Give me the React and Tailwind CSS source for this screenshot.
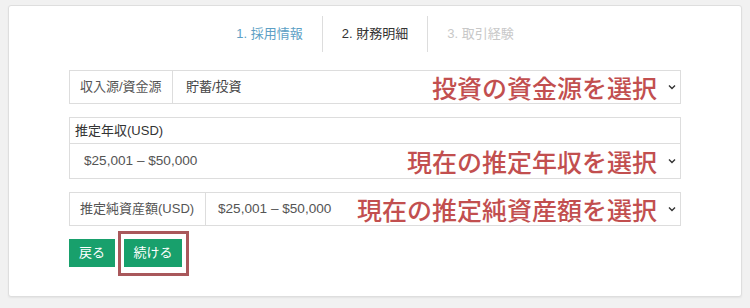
import React from "react";

const Chevron = () => (
  <svg width="8" height="6" viewBox="0 0 8 6" className="shrink-0">
    <path d="M1 1.5 L4 4.5 L7 1.5" fill="none" stroke="#333" strokeWidth="1.4" />
  </svg>
);

const ff = { fontFamily: '"Liberation Sans", "Noto Sans CJK JP", sans-serif' };
const redCls = "ml-auto text-[25px] leading-none font-medium text-[#c24f4f]";
const redFont = { fontFamily: '"Noto Sans CJK JP", sans-serif' };

export default function App() {
  return (
    <div className="w-[750px] h-[308px] bg-[#f1f1f1] pt-[5px] pl-[8px]" style={ff}>
      <div className="w-[734px] h-[292px] bg-white border border-[#dedede] rounded-[3px] shadow-[0_1px_2px_rgba(0,0,0,0.06)] pt-[10px] px-[60px]">
        {/* Tabs */}
        <div className="flex justify-center h-[36px] text-[13px]">
          <div className="flex items-center px-[19px] text-[#5d9fc5]">1. 採用情報</div>
          <div className="flex items-center px-[19px] border-l border-[#dddddd] text-[#333]">2. 財務明細</div>
          <div className="flex items-center px-[19px] border-l border-[#dddddd] text-[#c8c8c8]">3. 取引経験</div>
        </div>

        {/* Row 1 */}
        <div className="mt-[18px] flex h-[34px] border border-[#dddddd] text-[13px]">
          <div className="w-[103px] flex items-center pl-[10px] text-[#555] border-r border-[#dddddd]">収入源/資金源</div>
          <div className="flex-1 flex items-center pl-[13px] pr-[4px]">
            <span className="text-[#444]">貯蓄/投資</span>
            <span className={redCls} style={redFont}>投資の資金源を選択</span>
            <span className="ml-[11px]"><Chevron /></span>
          </div>
        </div>

        {/* Row 2 */}
        <div className="mt-[13px] border border-[#dddddd] text-[13px]">
          <div className="h-[26px] flex items-center pl-[5px] text-[#333] border-b border-[#dddddd]">推定年収(USD)</div>
          <div className="h-[34px] flex items-center pl-[14px] pr-[4px]">
            <span className="text-[#555] text-[13.6px]">$25,001 – $50,000</span>
            <span className={redCls} style={redFont}>現在の推定年収を選択</span>
            <span className="ml-[11px]"><Chevron /></span>
          </div>
        </div>

        {/* Row 3 */}
        <div className="mt-[13px] flex h-[34px] border border-[#dddddd] text-[13px]">
          <div className="w-[136px] flex items-center pl-[10px] text-[#555] border-r border-[#dddddd]">推定純資産額(USD)</div>
          <div className="flex-1 flex items-center pl-[12px] pr-[4px]">
            <span className="text-[#555] text-[13.6px]">$25,001 – $50,000</span>
            <span className={redCls} style={redFont}>現在の推定純資産額を選択</span>
            <span className="ml-[11px]"><Chevron /></span>
          </div>
        </div>

        {/* Buttons */}
        <div className="mt-[5px] flex items-start text-[13px]">
          <button className="mt-[8px] w-[46px] h-[28px] bg-[#18a06c] text-white flex items-center justify-center">戻る</button>
          <div className="ml-[3px] border-[3px] border-[#a9585b] pl-[3px] pr-[4px] pt-[5px] pb-[6px]">
            <button className="w-[58px] h-[28px] bg-[#18a06c] text-white flex items-center justify-center">続ける</button>
          </div>
        </div>
      </div>
    </div>
  );
}
